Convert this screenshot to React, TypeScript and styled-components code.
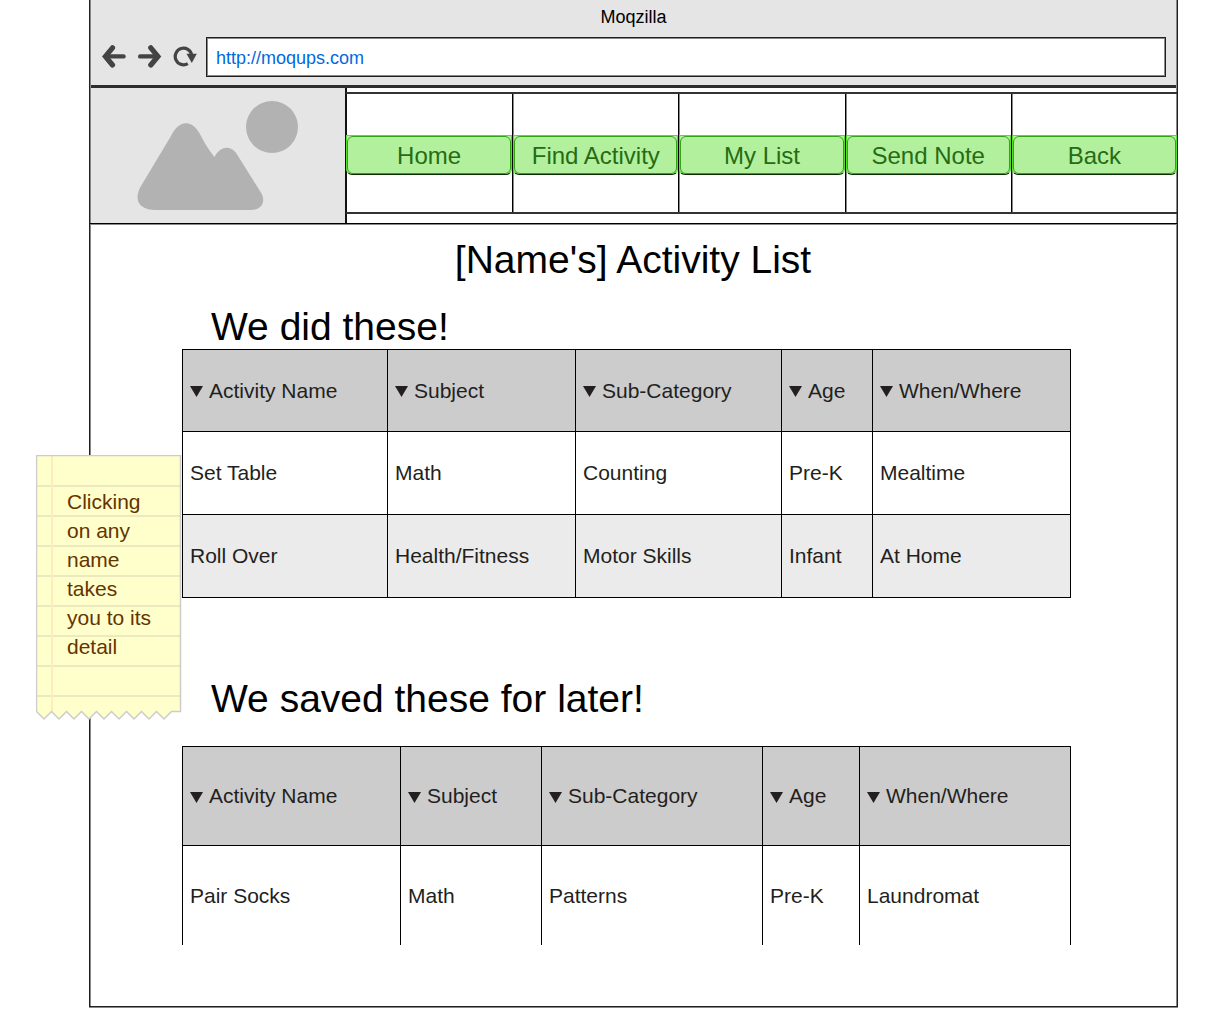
import React from 'react';
import styled, { createGlobalStyle } from 'styled-components';

const INK = '#231f20';
const SOFT = '#8a8788';

const GlobalStyle = createGlobalStyle`
  * { box-sizing: border-box; }
  body { margin: 0; background: #fff; font-family: Arial, "Liberation Sans", sans-serif; color: #000; }
`;

const Page = styled.div`
  position: relative;
  padding: 0 27px 20px 89px;
`;

const BrowserWindow = styled.div`
  border: 1px solid ${INK};
  border-top: 0;
  box-shadow: inset 1px 0 ${SOFT}, inset -1px 0 ${SOFT}, 0 1px ${SOFT};
`;

const Chrome = styled.header`
  height: 88px;
  margin: 0 1px;
  background: #e5e5e5;
  border-bottom: 3px solid #302c2d;
`;

const WindowTitle = styled.div`
  height: 37px;
  font-size: 18px;
  line-height: 34px;
  text-align: center;
`;

const Toolbar = styled.form`
  display: flex;
  align-items: center;
  padding: 0 10px;
`;

const IconButton = styled.button`
  display: flex;
  width: 36px;
  height: 40px;
  padding: 0;
  align-items: center;
  border: 0;
  background: none;

  &:nth-of-type(3) { width: 33px; }
`;

const AddressInput = styled.input`
  flex: 1;
  min-width: 0;
  height: 40px;
  padding: 2px 8px 0 9px;
  border: 1px solid ${INK};
  box-shadow: inset 0 0 0 1px ${SOFT};
  border-radius: 0;
  background: #fff;
  color: #0069e0;
  font: 18px Arial, "Liberation Sans", sans-serif;
`;

const Banner = styled.div`
  display: flex;
  height: 136px;
  border-bottom: 1px solid #000;
  box-shadow: 0 1px ${SOFT};
`;

const Picture = styled.div`
  flex: 0 0 257px;
  border-right: 2px solid #151213;
  margin-right: -1px;
  background: #e5e5e5;
  box-shadow: inset 1px 0 ${SOFT};
  svg { display: block; }
`;

const Nav = styled.nav`
  display: grid;
  flex: 1;
  grid-template-columns: repeat(5, 1fr);
  height: 122px;
  margin-top: 4px;
  border: solid #333;
  border-width: 2px 0;
`;

const NavCell = styled.div`
  display: flex;
  align-items: center;
  border-left: 1px solid #000;
  box-shadow: inset 1px 0 ${SOFT};
  padding-top: 4px;
  &:first-child { border-left: 0; box-shadow: none; }
`;

const NavButton = styled.button`
  position: relative;
  flex: 1;
  height: 40px;
  padding: 2px 0 0;
  border: 1px solid #55e030;
  border-bottom-color: #0c2c06;
  border-radius: 0 0 6px 6px;
  background: #b2f09d;
  color: #266c14;
  font: 24px Arial, "Liberation Sans", sans-serif;

  &::before {
    content: "";
    position: absolute;
    inset: 0;
    border: 1px solid #2fa512;
    border-radius: 6px;
  }
`;

const Content = styled.main`
  padding: 0 106px 61px 92px;
`;

const Title = styled.h1`
  margin: 0;
  padding: 13px 0 0 13px;
  font-size: 39px;
  font-weight: 400;
  line-height: 46px;
  text-align: center;
`;

const SectionTitle = styled.h2<{ $above: number; $below: number }>`
  margin: 0;
  padding: ${p => p.$above}px 0 ${p => p.$below}px 29px;
  font-size: 39px;
  font-weight: 400;
  line-height: 44px;
`;

const Table = styled.table<{ $head: number; $row: number; $open?: boolean }>`
  width: 100%;
  table-layout: fixed;
  border-collapse: separate;
  border-spacing: 0;
  border: solid #000;
  border-width: 1px 0 0 1px;
  color: ${INK};
  font-size: 21px;
  line-height: 24px;

  th, td {
    height: ${p => p.$row}px;
    padding: 0 7px;
    border: solid #000;
    border-width: 0 1px 1px 0;
    text-align: left;
    font-weight: 400;
    white-space: nowrap;
  }
  th { height: ${p => p.$head}px; background: #ccc; }
  tbody tr:nth-child(even) { background: #ebebeb; }
  tbody tr:last-child td { border-bottom-width: ${p => (p.$open ? 0 : 1)}px; }
`;

const Sort = styled.button`
  display: flex;
  align-items: center;
  gap: 6px;
  padding: 0;
  border: 0;
  background: none;
  color: inherit;
  font: inherit;
`;

const Note = styled.aside`
  position: absolute;
  top: 455px;
  left: 36px;
  width: 146px;
  height: 266px;
  svg { position: absolute; inset: 0; }
  p {
    position: relative;
    width: 88px;
    margin: 32px 0 0 31px;
    color: #663300;
    font-size: 21px;
    line-height: 29px;
  }
`;

const BackIcon = () => (
  <svg width="26" height="26" viewBox="0 0 26 26" fill="none" stroke="#444" strokeLinecap="round">
    <path d="M11.500 3.800 4.400 12.400 11.500 21" strokeWidth="5.200" />
    <path d="M5 12.400h17.500" strokeWidth="4.400" />
  </svg>
);
const ForwardIcon = () => (
  <svg width="26" height="26" viewBox="0 0 26 26" fill="none" stroke="#444" strokeLinecap="round">
    <path d="M13.800 3.800 20.900 12.400 13.800 21" strokeWidth="5.200" />
    <path d="M20 12.400H3.200" strokeWidth="4.400" />
  </svg>
);
const ReloadIcon = () => (
  <svg width="26" height="26" viewBox="0 0 26 26">
    <path d="M14.800 19.600A8.300 8.300 0 1 1 18.700 11" fill="none" stroke="#444" strokeWidth="3.200" />
    <path d="M13.500 9.800h10.300l-5 9.200z" fill="#444" />
  </svg>
);

type TableData = { head: number; row: number; open?: boolean; widths: number[]; rows: string[][] };
const headings = ['Activity Name', 'Subject', 'Sub-Category', 'Age', 'When/Where'];
const done: TableData = {
  head: 82,
  row: 83,
  widths: [205, 188, 206, 91, 198],
  rows: [
    ['Set Table', 'Math', 'Counting', 'Pre-K', 'Mealtime'],
    ['Roll Over', 'Health/Fitness', 'Motor Skills', 'Infant', 'At Home'],
  ],
};
const saved: TableData = {
  head: 99,
  row: 99,
  open: true,
  widths: [218, 141, 221, 97, 211],
  rows: [['Pair Socks', 'Math', 'Patterns', 'Pre-K', 'Laundromat']],
};

const ActivityTable = ({ data, label }: { data: TableData; label: string }) => (
  <Table $head={data.head} $row={data.row} $open={data.open} aria-label={label}>
    <colgroup>
      {data.widths.map((w, i) => <col key={i} style={{ width: `${(w / 888) * 100}%` }} />)}
    </colgroup>
    <thead>
      <tr>
        {headings.map(h => (
          <th key={h} scope="col">
            <Sort type="button">
              <svg width="13" height="13" viewBox="0 0 13 13"><path d="M0 2h13L6.500 13z" fill={INK} /></svg>
              {h}
            </Sort>
          </th>
        ))}
      </tr>
    </thead>
    <tbody>
      {data.rows.map(r => <tr key={r[0]}>{r.map(c => <td key={c}>{c}</td>)}</tr>)}
    </tbody>
  </Table>
);

const tornPaper =
  'M1 1H145V257H136L128.500 264.500 121 257 113.500 264.500 106 257 98.500 264.500 91 257 83.500 264.500 76 257 68.500 264.500 61 257 53.500 264.500 46 257 38.500 264.500 31 257 23.500 264.500 16 257 8.500 264.500 1 257Z';

export default function App() {
  return (
    <Page>
      <GlobalStyle />
      <BrowserWindow>
        <Chrome>
          <WindowTitle>Moqzilla</WindowTitle>
          <Toolbar onSubmit={e => e.preventDefault()}>
            <IconButton type="button" aria-label="Back one page"><BackIcon /></IconButton>
            <IconButton type="button" aria-label="Forward one page"><ForwardIcon /></IconButton>
            <IconButton type="button" aria-label="Reload"><ReloadIcon /></IconButton>
            <AddressInput aria-label="Address" defaultValue="http://moqups.com" />
          </Toolbar>
        </Chrome>
        <Banner>
          <Picture>
            <svg width="254" height="134" viewBox="0 0 254 134" fill="#b2b2b2" role="img" aria-label="Logo">
              <circle cx="182" cy="39" r="26" />
              <path d="M51 98 81 48C89 31 103 31 111 48Q117 60 124.500 69C131 57 142 57 148 68L170 103C177 113 172 122 161 122H66C49 122 43 112 51 98Z" />
            </svg>
          </Picture>
          <Nav>
            {['Home', 'Find Activity', 'My List', 'Send Note', 'Back'].map(n => (
              <NavCell key={n}><NavButton type="button">{n}</NavButton></NavCell>
            ))}
          </Nav>
        </Banner>
        <Content>
          <Title>[Name's] Activity List</Title>
          <SectionTitle $above={22} $below={0}>We did these!</SectionTitle>
          <ActivityTable data={done} label="We did these!" />
          <SectionTitle $above={79} $below={25}>We saved these for later!</SectionTitle>
          <ActivityTable data={saved} label="We saved these for later!" />
        </Content>
      </BrowserWindow>
      <Note>
        <svg width="146" height="266" viewBox="0.5 0.5 146 266">
          <path d={tornPaper} fill="#ffffcb" />
          <path d="M1 31.500H145M1 61.500H145M1 91.500H145M1 121.500H145M1 151.500H145M1 181.500H145M1 211.500H145M1 241.500H145" stroke="#ebe9bd" strokeWidth="2" />
          <path d="M16.500 1V257" stroke="#ffebbb" strokeWidth="2" />
          <path d={tornPaper} fill="none" stroke="#ccc" strokeWidth="1.500" />
        </svg>
        <p>Clicking on any name takes you to its detail</p>
      </Note>
    </Page>
  );
}
